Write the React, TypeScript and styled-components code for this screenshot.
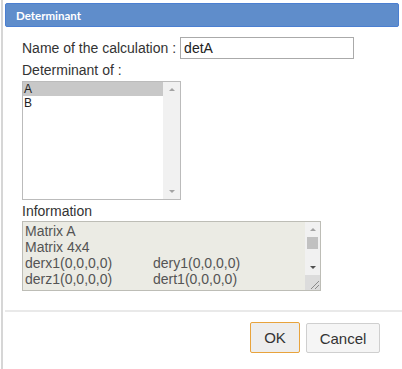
import React, { FC } from "react";
import styled, { createGlobalStyle } from "styled-components";

const GlobalStyle = createGlobalStyle`
  html, body {
    margin: 0;
    padding: 0;
    background: #fff;
  }
  body {
    font-family: "Liberation Sans", Arial, sans-serif;
    color: #333;
  }
`;

const Frame = styled.div`
  margin-left: 1px;
  border-left: 2px solid #d6d6d6;
  height: 369px;
  box-sizing: border-box;
  display: flex;
  flex-direction: column;
`;

const TitleBar = styled.div`
  margin: 3px 3px 0 2px;
  height: 24px;
  box-sizing: border-box;
  background: #5f8dcb;
  border: 1px solid #4b7fd1;
  border-radius: 2px;
  display: flex;
  align-items: center;
  padding-left: 10px;
  color: #fff;
  font-family: Lato, "Liberation Sans", sans-serif;
  font-weight: bold;
  font-size: 11.5px;
`;

const Body = styled.div`
  padding: 10px 0 0 19px;
  display: flex;
  flex-direction: column;
  font-size: 14px;
`;

const NameRow = styled.div`
  display: flex;
  align-items: center;
  gap: 4px;
`;

const Label = styled.div<{ top?: number }>`
  line-height: 16px;
  margin-top: ${(p) => p.top ?? 0}px;
  color: #333;
`;

const TextInput = styled.input`
  width: 174px;
  height: 22px;
  box-sizing: border-box;
  border: 1px solid #aaa;
  padding: 0 3px;
  font: 14px "Liberation Sans", Arial, sans-serif;
  color: #222;
  outline: none;
`;

const ListBox = styled.div`
  margin-top: 3px;
  width: 159px;
  height: 119px;
  box-sizing: border-box;
  border: 1px solid #bbb;
  display: flex;
`;

const ListItems = styled.div`
  flex: 1;
  display: flex;
  flex-direction: column;
`;

const ListItem = styled.div<{ selected?: boolean }>`
  height: 14px;
  line-height: 14px;
  padding-left: 1px;
  font-size: 12px;
  color: #222;
  background: ${(p) => (p.selected ? "#c8c8c8" : "transparent")};
`;

const ScrollTrack = styled.div<{ w: number }>`
  width: ${(p) => p.w}px;
  background: #f1f1f1;
  display: flex;
  flex-direction: column;
  align-items: center;
`;

const Arrow = styled.div<{ dir: "up" | "down"; dark?: boolean }>`
  height: 15px;
  width: 100%;
  display: flex;
  align-items: center;
  justify-content: center;
  &::after {
    content: "";
    border-left: 3px solid transparent;
    border-right: 3px solid transparent;
    ${(p) =>
      p.dir === "up"
        ? `border-bottom: 3px solid ${p.dark ? "#505050" : "#a3a3a3"};`
        : `border-top: 3px solid ${p.dark ? "#505050" : "#a3a3a3"};`}
  }
`;

const Spacer = styled.div`
  flex: 1;
`;

const Thumb = styled.div`
  width: 11px;
  height: 12px;
  background: #c1c1c1;
`;

const InfoBox = styled.div`
  margin-top: 2px;
  width: 299px;
  height: 70px;
  box-sizing: border-box;
  border: 1px solid #bdbdb6;
  background: #ebebe4;
  display: flex;
`;

const InfoText = styled.div`
  flex: 1;
  padding: 1px 0 0 2px;
  font-size: 14px;
  line-height: 16px;
  color: #545454;
  overflow: hidden;
`;

const InfoGrid = styled.div`
  display: grid;
  grid-template-columns: 128px auto;
`;

const InfoScroll = styled.div`
  width: 15px;
  display: flex;
  flex-direction: column;
`;

const InfoTrack = styled.div`
  flex: 1;
  background: #f1f1f1;
  display: flex;
  flex-direction: column;
  align-items: center;
`;

const Grip = styled.div`
  height: 15px;
  background: #dcdcdc;
  display: flex;
  align-items: flex-end;
  justify-content: flex-end;
`;

const Separator = styled.div`
  margin: 19px 0 0 2px;
  height: 2px;
  background: #e9e9e9;
`;

const ButtonBar = styled.div`
  display: flex;
  justify-content: flex-end;
  align-items: flex-start;
  gap: 6px;
  padding: 10px 22px 0 0;
`;

const Button = styled.button<{ primary?: boolean }>`
  width: ${(p) => (p.primary ? 50 : 74)}px;
  height: ${(p) => (p.primary ? 31 : 30)}px;
  margin-top: ${(p) => (p.primary ? 0 : 1)}px;
  box-sizing: border-box;
  padding: 0;
  border-radius: 2px;
  font: 15px "Liberation Sans", Arial, sans-serif;
  color: #333;
  background: ${(p) => (p.primary ? "#ededed" : "#f5f5f5")};
  border: 1px solid ${(p) => (p.primary ? "#e8a33c" : "#cfcfcf")};
`;

const App: FC = () => {
  return (
    <>
      <GlobalStyle />
      <Frame>
        <TitleBar>Determinant</TitleBar>
        <Body>
          <NameRow>
            <Label>Name of the calculation :</Label>
            <TextInput defaultValue="detA" />
          </NameRow>
          <Label top={3}>Determinant of :</Label>
          <ListBox>
            <ListItems>
              <ListItem selected>A</ListItem>
              <ListItem>B</ListItem>
            </ListItems>
            <ScrollTrack w={17}>
              <Arrow dir="up" />
              <Spacer />
              <Arrow dir="down" />
            </ScrollTrack>
          </ListBox>
          <Label top={3}>Information</Label>
          <InfoBox>
            <InfoText>
              <div>Matrix A</div>
              <div>Matrix 4x4</div>
              <InfoGrid>
                <span>derx1(0,0,0,0)</span>
                <span>dery1(0,0,0,0)</span>
                <span>derz1(0,0,0,0)</span>
                <span>dert1(0,0,0,0)</span>
              </InfoGrid>
            </InfoText>
            <InfoScroll>
              <InfoTrack>
                <Arrow dir="up" />
                <Thumb />
                <Spacer />
                <Arrow dir="down" dark />
              </InfoTrack>
              <Grip>
                <svg width="12" height="12" viewBox="0 0 12 12">
                  <path d="M3 11 L11 3 M7 11 L11 7" stroke="#8a8a8a" strokeWidth="1" />
                </svg>
              </Grip>
            </InfoScroll>
          </InfoBox>
        </Body>
        <Separator />
        <ButtonBar>
          <Button primary>OK</Button>
          <Button>Cancel</Button>
        </ButtonBar>
      </Frame>
    </>
  );
};

export default App;
